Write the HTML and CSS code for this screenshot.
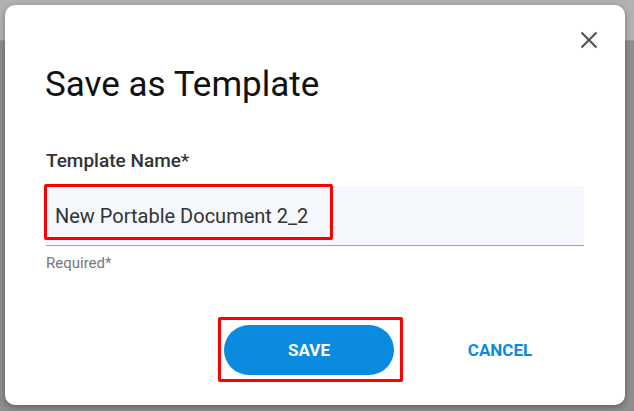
FILE: index.html
```html
<!DOCTYPE html>
<html lang="en">
<head>
  <meta charset="UTF-8">
  <meta name="viewport" content="width=device-width, initial-scale=1.0">
  <title>Save as Template</title>
  <link rel="stylesheet" href="styles.css">
</head>
<body>
  <div class="topbar"></div>

  <div class="dialog">
    <div class="dialog-head">
      <button class="close-btn" aria-label="Close">
        <svg width="24" height="24" viewBox="0 0 24 24">
          <path d="M4.5 4.5 L19.5 19.5 M19.5 4.5 L4.5 19.5" stroke="#555" stroke-width="2.2" fill="none"/>
        </svg>
      </button>
    </div>

    <h1 class="dialog-title">Save as Template</h1>

    <label class="field-label" for="templateName">Template Name*</label>
    <div class="field">
      <input type="text" id="templateName" value="New Portable Document 2_2">
      <span class="mark mark-input"></span>
    </div>
    <div class="hint">Required*</div>

    <div class="actions">
      <div class="save-wrap">
        <button class="btn-save">SAVE</button>
        <span class="mark mark-save"></span>
      </div>
      <button class="btn-cancel">CANCEL</button>
    </div>
  </div>
</body>
</html>
```

FILE: styles.css
```css
body {
  margin: 0;
  height: 411px;
  overflow: hidden;
  font-family: Roboto, "Liberation Sans", sans-serif;
  background-color: #8e8e8e;
}
.topbar {
  position: absolute;
  top: 0;
  left: 0;
  right: 0;
  height: 40px;
  background-color: #b2b2b2;
  border-bottom: 1px solid #9a9a9a;
}
.dialog {
  position: relative;
  box-sizing: border-box;
  width: 620px;
  height: 400px;
  margin: 5px 0 0 5px;
  padding: 0 41px;
  background-color: white;
  border-radius: 10px;
  box-shadow: 0 2px 6px rgba(0, 0, 0, 0.35);
}
.dialog-head {
  display: flex;
  justify-content: flex-end;
  height: 60px;
  box-sizing: border-box;
  padding-top: 23px;
  margin-right: -17px;
}
.close-btn {
  width: 24px;
  height: 24px;
  padding: 0;
  border: none;
  background: none;
  cursor: pointer;
}
.close-btn svg {
  display: block;
}
.dialog-title {
  margin: 0 0 44px -1px;
  font-size: 35px;
  font-weight: 400;
  line-height: 40px;
  color: #111;
}
.field-label {
  display: block;
  font-size: 19px;
  font-weight: 500;
  line-height: 24px;
  color: #333;
}
.field {
  position: relative;
  margin-top: 13px;
}
.field input {
  display: block;
  width: 100%;
  height: 60px;
  box-sizing: border-box;
  padding: 0 9px;
  border: none;
  border-bottom: 1px solid #64b2e4;
  background-color: #f4f8fc;
  font-family: Roboto, "Liberation Sans", sans-serif;
  font-size: 20px;
  color: #333;
  outline: none;
}
.hint {
  margin-top: 7px;
  font-size: 15px;
  line-height: 20px;
  color: #777;
}
.actions {
  display: flex;
  justify-content: flex-end;
  align-items: center;
  gap: 56px;
  margin-top: 52px;
  padding-right: 34px;
}
.save-wrap {
  position: relative;
}
.btn-save {
  display: block;
  width: 170px;
  height: 50px;
  border: none;
  border-radius: 25px;
  background-color: #0a8bdf;
  color: white;
  font-family: Roboto, "Liberation Sans", sans-serif;
  font-size: 17px;
  font-weight: 700;
  cursor: pointer;
}
.btn-cancel {
  width: 100px;
  padding: 0;
  border: none;
  background: none;
  color: #0a8bdf;
  font-family: Roboto, "Liberation Sans", sans-serif;
  font-size: 17px;
  font-weight: 700;
  cursor: pointer;
}
.mark {
  position: absolute;
  box-sizing: border-box;
  border: 3px solid #ff0000;
  border-radius: 2px;
  pointer-events: none;
}
.mark-input {
  left: -2px;
  top: -2px;
  width: 289px;
  height: 56px;
}
.mark-save {
  left: -6px;
  top: -8px;
  width: 185px;
  height: 65px;
}
```
